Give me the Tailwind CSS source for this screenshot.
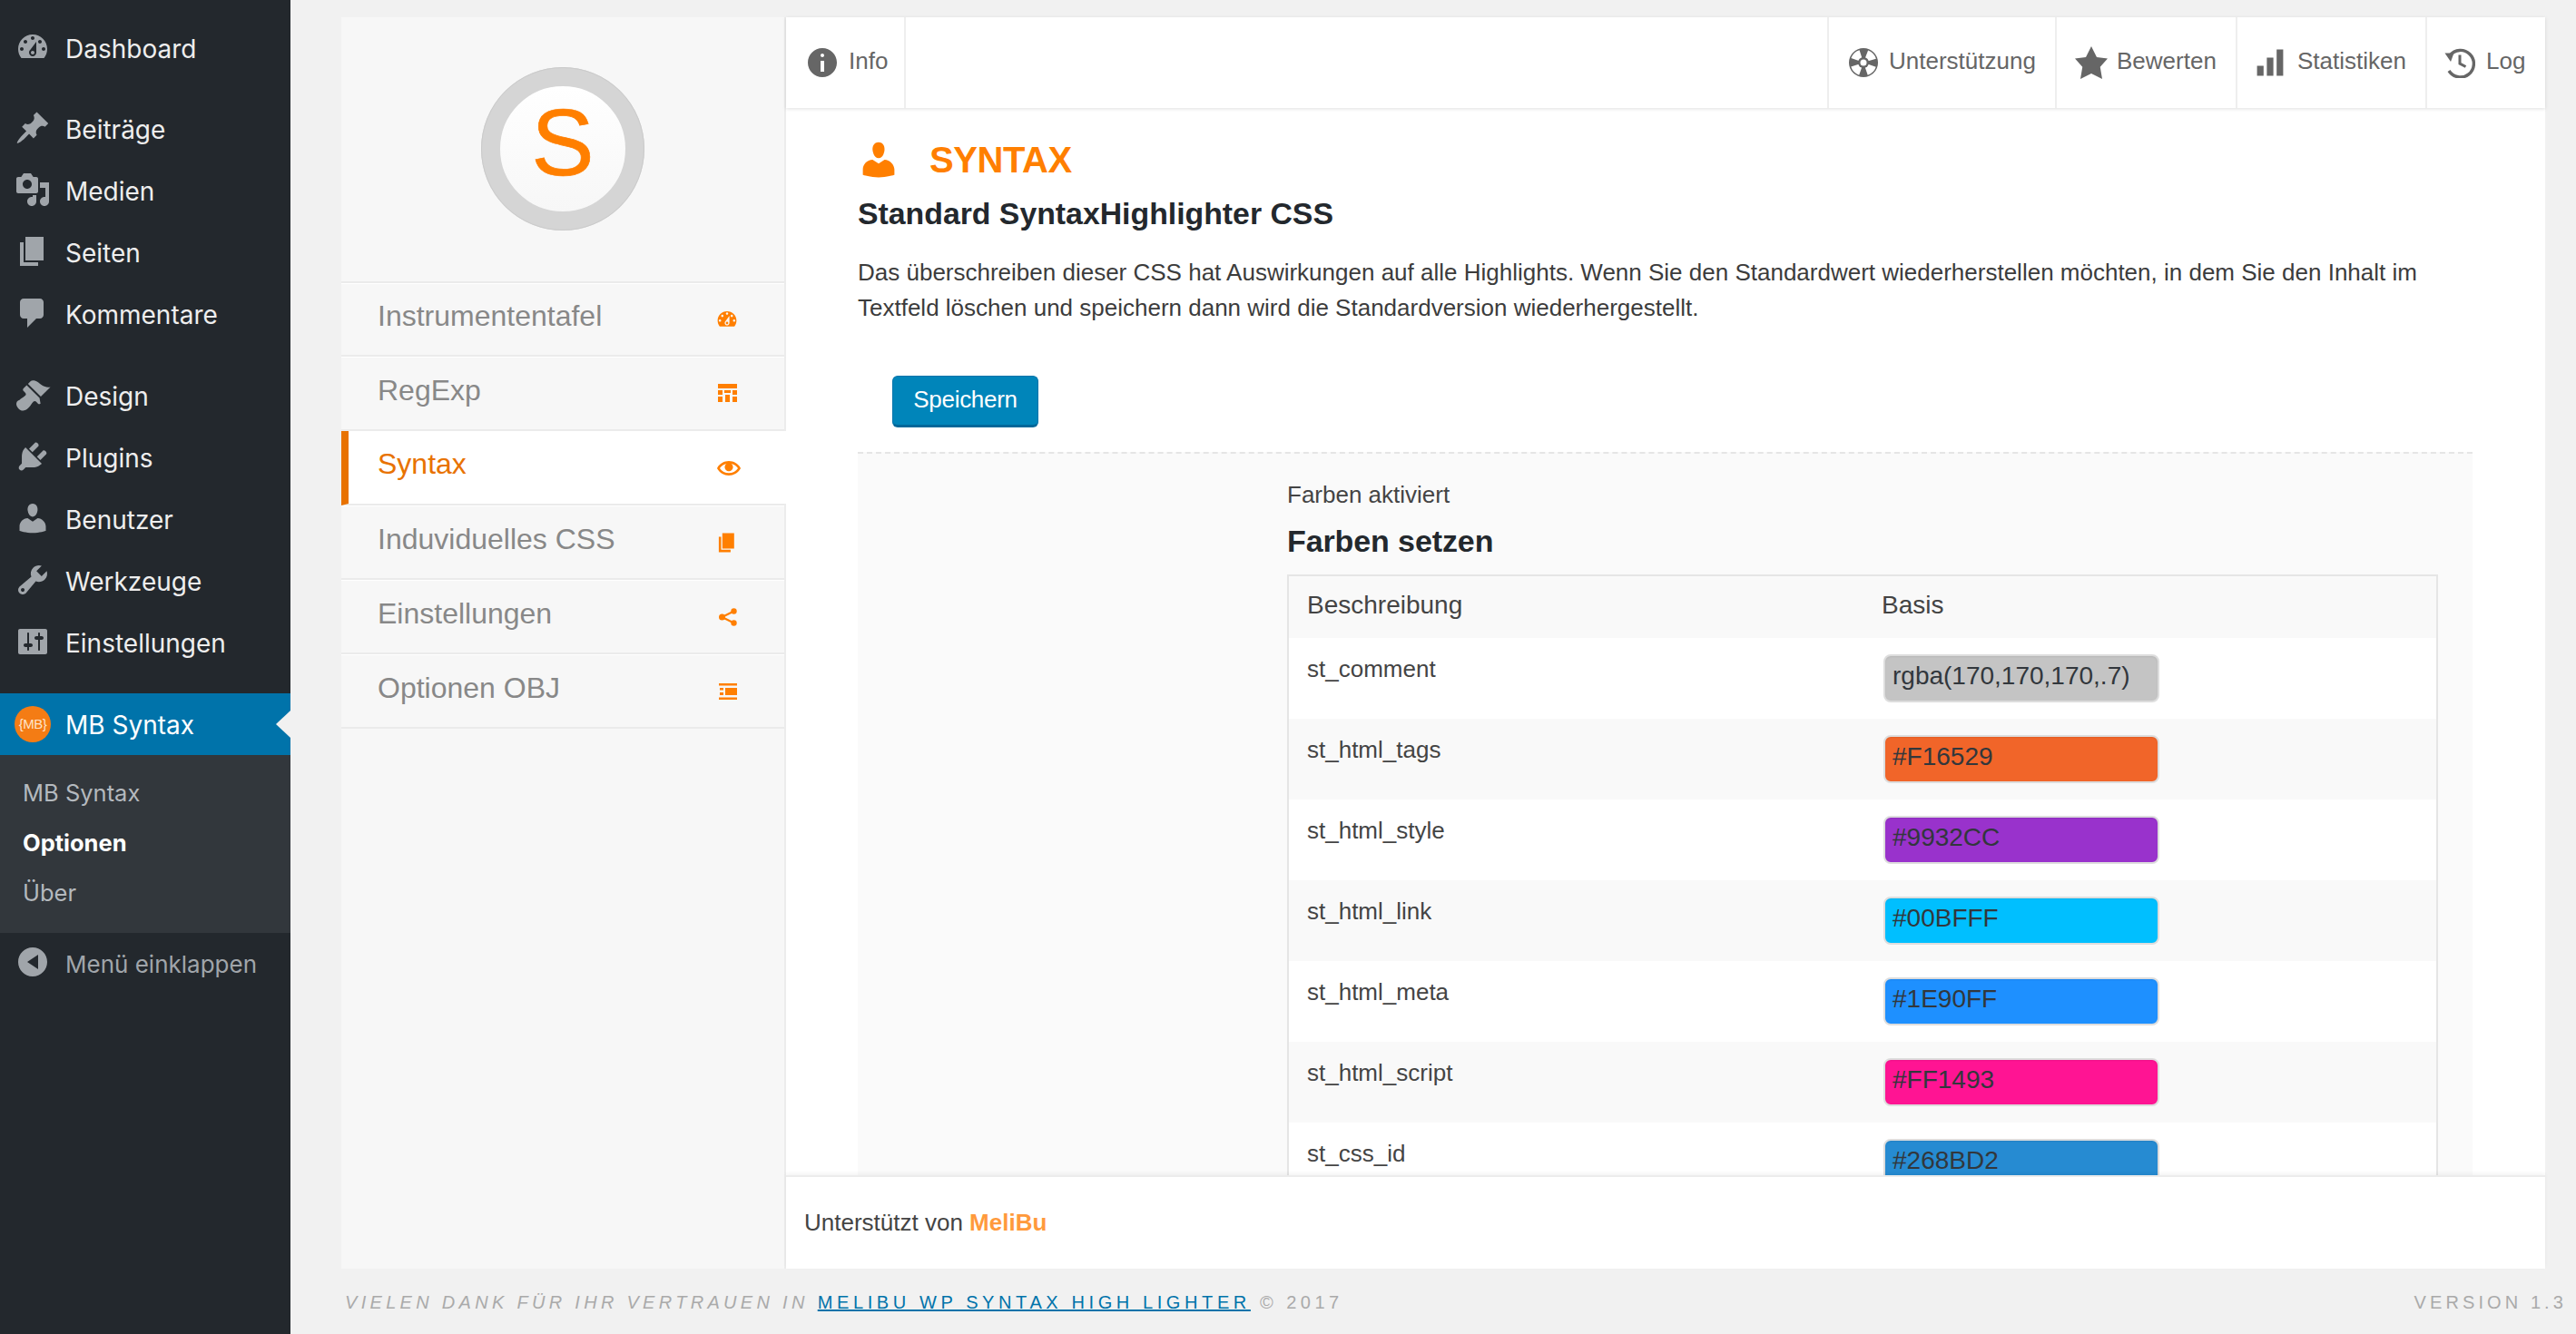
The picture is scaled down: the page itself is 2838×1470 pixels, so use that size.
<!DOCTYPE html>
<html lang="de">
<head>
<meta charset="utf-8">
<title>MB Syntax</title>
<script src="https://cdn.jsdelivr.net/npm/@tailwindcss/browser@4"></script>
</head>
<body class="m-0 bg-[#f1f1f1] font-['Liberation_Sans',Arial,sans-serif] text-[26px] text-[#444] overflow-hidden">
<div class="flex h-[1470px] w-[2838px]">

<!-- WP admin menu -->
<aside class="w-[320px] shrink-0 bg-[#23282d] font-['Inter',sans-serif] text-[28px] text-[#eee] pt-[20px]">
  <a class="flex items-center h-[68px]"><svg class="w-[40px] h-[40px] ml-[16px] mr-[16px] mb-[4px] fill-[#a0a5aa]" viewBox="0 0 20 20"><path d="M3.76 16h12.48c1.1-1.37 1.76-3.11 1.76-5 0-4.42-3.58-8-8-8s-8 3.58-8 8c0 1.89.66 3.63 1.76 5zM10 4c.55 0 1 .45 1 1s-.45 1-1 1-1-.45-1-1 .45-1 1-1zM6 6c.55 0 1 .45 1 1s-.45 1-1 1-1-.45-1-1 .45-1 1-1zm8 0c.55 0 1 .45 1 1s-.45 1-1 1-1-.45-1-1 .45-1 1-1zm-5.37 5.55L12 7v6c0 1.1-.9 2-2 2s-2-.9-2-2c0-.57.24-1.08.63-1.45zM4 10c.55 0 1 .45 1 1s-.45 1-1 1-1-.45-1-1 .45-1 1-1zm12 0c.55 0 1 .45 1 1s-.45 1-1 1-1-.45-1-1 .45-1 1-1zm-5 3c0-.55-.45-1-1-1s-1 .45-1 1 .45 1 1 1 1-.45 1-1z" fill-rule="evenodd"/></svg>Dashboard</a>
  <div class="mt-[21px]">
    <a class="flex items-center h-[68px]"><svg class="w-[40px] h-[40px] ml-[16px] mr-[16px] mb-[4px] fill-[#a0a5aa]" viewBox="0 0 20 20"><path d="M10.44 3.02l1.82-1.82 6.36 6.35-1.83 1.82c-1.05-.68-2.48-.57-3.41.36l-.75.75c-.92.93-1.04 2.35-.35 3.41l-1.83 1.82-2.41-2.41-2.8 2.79c-.42.42-3.38 2.71-3.8 2.29s1.86-3.39 2.28-3.81l2.79-2.79L4.1 9.36l1.83-1.82c1.05.69 2.48.57 3.4-.36l.75-.75c.93-.92 1.05-2.35.36-3.41z"/></svg>Beiträge</a>
    <a class="flex items-center h-[68px]"><svg class="w-[40px] h-[40px] ml-[16px] mr-[16px] mb-[4px] fill-[#a0a5aa]" viewBox="0 0 20 20"><path d="M13 11V4c0-.55-.45-1-1-1h-1.67L9 1H5L3.67 3H2c-.55 0-1 .45-1 1v7c0 .55.45 1 1 1h10c.55 0 1-.45 1-1zM7 4.5c1.38 0 2.5 1.12 2.5 2.5S8.38 9.5 7 9.5 4.5 8.38 4.5 7 5.62 4.5 7 4.5zM14 6h5v10.5c0 1.38-1.12 2.5-2.5 2.5S14 17.88 14 16.5s1.12-2.5 2.5-2.5c.17 0 .34.02.5.05V9h-3V6zm-4 8.05V13h2v3.5c0 1.38-1.12 2.5-2.5 2.5S7 17.88 7 16.5 8.12 14 9.5 14c.17 0 .34.02.5.05z"/></svg>Medien</a>
    <a class="flex items-center h-[68px]"><svg class="w-[40px] h-[40px] ml-[16px] mr-[16px] mb-[4px] fill-[#a0a5aa]" viewBox="0 0 20 20"><path d="M6 15V2h10v13H6zm-1 1h8v2H3V5h2v11z"/></svg>Seiten</a>
    <a class="flex items-center h-[68px]"><svg class="w-[40px] h-[40px] ml-[16px] mr-[16px] mb-[4px] fill-[#a0a5aa]" viewBox="0 0 20 20"><path d="M5 2h9c1.1 0 2 .9 2 2v7c0 1.1-.9 2-2 2h-2l-5 5v-5H5c-1.1 0-2-.9-2-2V4c0-1.1.9-2 2-2z"/></svg>Kommentare</a>
  </div>
  <div class="mt-[22px]">
    <a class="flex items-center h-[68px]"><svg class="w-[40px] h-[40px] ml-[16px] mr-[16px] mb-[4px] fill-[#a0a5aa]" viewBox="0 0 20 20"><path d="M14.48 11.06L7.41 3.99l1.5-1.5c.5-.56 2.3-.47 3.51.32 1.21.8 1.43 1.28 2.91 2.1 1.18.64 2.45 1.26 4.45.85zm-.71.71L6.7 4.7 4.93 6.47c-.39.39-.39 1.02 0 1.41l1.06 1.06c.39.39.39 1.03 0 1.42-.6.6-1.43 1.11-2.21 1.69-.35.26-.7.53-1.01.84C1.43 13.23.99 14.24 1 15.17c.02.94.48 1.73 1.19 2.43.7.7 1.49 1.16 2.43 1.17.93.01 1.94-.43 3.28-1.77.31-.31.58-.66.85-1.02.57-.78 1.08-1.6 1.69-2.21.39-.39 1.02-.39 1.41 0l1.06 1.06c.39.39 1.02.39 1.41 0z"/></svg>Design</a>
    <a class="flex items-center h-[68px]"><svg class="w-[40px] h-[40px] ml-[16px] mr-[16px] mb-[4px] fill-[#a0a5aa]" viewBox="0 0 20 20"><path d="M13.11 4.36L9.87 7.6 8 5.73l3.24-3.24c.35-.34 1.05-.2 1.56.32.52.51.66 1.21.31 1.55zm-8 1.77l.91-1.12 9.01 9.01-1.19.84c-.71.71-2.63 1.16-3.82 1.16H6.14L4.9 17.26c-.59.59-1.54.59-2.12 0-.59-.58-.59-1.53 0-2.12l1.24-1.24v-3.88c0-1.13.4-3.19 1.09-3.89zm7.26 3.97l3.24-3.24c.34-.35 1.04-.21 1.55.31.52.51.66 1.21.31 1.55l-3.24 3.25z"/></svg>Plugins</a>
    <a class="flex items-center h-[68px]"><svg class="w-[40px] h-[40px] ml-[16px] mr-[16px] mb-[4px] fill-[#a0a5aa]" viewBox="0 0 20 20"><path d="M10 9.25c-2.27 0-2.73-3.44-2.73-3.44C7 4.02 7.82 2 9.97 2c2.16 0 2.98 2.02 2.71 3.81 0 0-.41 3.44-2.68 3.44zm0 2.57L12.72 10c2.39 0 4.52 2.33 4.52 4.53v2.49s-3.65 1.13-7.24 1.13c-3.65 0-7.24-1.13-7.24-1.13v-2.49c0-2.25 1.94-4.48 4.47-4.48z"/></svg>Benutzer</a>
    <a class="flex items-center h-[68px]"><svg class="w-[40px] h-[40px] ml-[16px] mr-[16px] mb-[4px] fill-[#a0a5aa]" viewBox="0 0 20 20"><path d="M16.68 9.77c-1.34 1.34-3.3 1.67-4.95.99l-5.41 6.52c-.99.99-2.59.99-3.58 0s-.99-2.59 0-3.57l6.52-5.42c-.68-1.65-.35-3.61.99-4.95 1.28-1.28 3.12-1.62 4.72-1.06l-2.89 2.89 2.82 2.82 2.86-2.87c.53 1.58.18 3.39-1.08 4.65zM3.81 16.21c.4.39 1.04.39 1.43 0 .4-.4.4-1.04 0-1.43-.39-.4-1.03-.4-1.43 0-.39.39-.39 1.03 0 1.43z"/></svg>Werkzeuge</a>
    <a class="flex items-center h-[68px]"><svg class="w-[40px] h-[40px] ml-[16px] mr-[16px] mb-[4px] fill-[#a0a5aa]" viewBox="0 0 20 20"><path d="M18 16V4c0-.55-.45-1-1-1H3c-.55 0-1 .45-1 1v12c0 .55.45 1 1 1h14c.55 0 1-.45 1-1zM8 11h1c.55 0 1 .45 1 1s-.45 1-1 1H8v1.5c0 .28-.22.5-.5.5s-.5-.22-.5-.5V13H6c-.55 0-1-.45-1-1s.45-1 1-1h1V5.5c0-.28.22-.5.5-.5s.5.22.5.5V11zm5-2h-1c-.55 0-1-.45-1-1s.45-1 1-1h1V5.5c0-.28.22-.5.5-.5s.5.22.5.5V7h1c.55 0 1 .45 1 1s-.45 1-1 1h-1v5.5c0 .28-.22.5-.5.5s-.5-.22-.5-.5V9z"/></svg>Einstellungen</a>
  </div>
  <a class="relative flex items-center h-[68px] mt-[21px] pt-[2px] bg-[#0073aa] text-white">
    <span class="w-[40px] h-[40px] ml-[16px] mr-[16px] -mt-[2px] rounded-full bg-[#f47c14] flex items-center justify-center font-['Liberation_Sans',sans-serif] text-[15px] tracking-[-0.5px] text-[#ffe3c8]">{MB}</span>MB Syntax
    <span class="absolute right-0 top-[19px] w-0 h-0 border-y-[15px] border-y-transparent border-r-[16px] border-r-[#f1f1f1]"></span>
  </a>
  <div class="bg-[#32373c] h-[196px] pt-[15px] text-[25.5px] text-[#b4b9be]">
    <a class="flex items-center h-[55px] pl-[25px]">MB Syntax</a>
    <a class="flex items-center h-[55px] pl-[25px] font-bold text-white">Optionen</a>
    <a class="flex items-center h-[55px] pl-[25px]">Über</a>
  </div>
  <a class="flex items-center h-[68px] text-[26px] text-[#a0a5aa]"><svg class="w-[40px] h-[40px] ml-[16px] mr-[16px] mb-[4px] fill-[#a0a5aa]" viewBox="0 0 20 20"><path d="M18 10c0-4.42-3.58-8-8-8s-8 3.58-8 8 3.58 8 8 8 8-3.58 8-8zm-5-4v8l-6-4z"/></svg>Menü einklappen</a>
</aside>

<!-- Content area -->
<div class="flex-1 min-w-0 pl-[56px] pr-[34px] pt-[19px]">
  <div class="flex h-[1379px]">

    <!-- Plugin nav -->
    <nav class="w-[490px] shrink-0 bg-[#f7f7f7] border-r-2 border-r-[#ececec] text-[32px] text-[#888]">
      <div class="h-[293px] flex items-start justify-center pt-[55px] border-b-2 border-b-[#ebebeb]">
        <div class="w-[180px] h-[180px] pb-[14px] rounded-full border-[21px] border-[#d5d5d5] bg-gradient-to-b from-white to-[#f7f7f7] flex items-center justify-center text-[104px] leading-none text-[#ff7f00] [-webkit-text-stroke:0.7px_#ff7f00] outline outline-1 -outline-offset-1 outline-[#cbcbcb]">S</div>
      </div>
      <a class="flex items-center justify-between h-[81px] pl-[40px] pr-[50px] border-t border-t-white border-b-2 border-b-[#ebebeb]"><span class="-mt-[8px]">Instrumententafel</span><svg class="w-[26px] h-[26px] fill-[#ff7f00]" viewBox="0 0 20 20"><path d="M3.76 16h12.48c1.1-1.37 1.76-3.11 1.76-5 0-4.42-3.58-8-8-8s-8 3.58-8 8c0 1.89.66 3.63 1.76 5zM10 4c.55 0 1 .45 1 1s-.45 1-1 1-1-.45-1-1 .45-1 1-1zM6 6c.55 0 1 .45 1 1s-.45 1-1 1-1-.45-1-1 .45-1 1-1zm8 0c.55 0 1 .45 1 1s-.45 1-1 1-1-.45-1-1 .45-1 1-1zm-5.37 5.55L12 7v6c0 1.1-.9 2-2 2s-2-.9-2-2c0-.57.24-1.08.63-1.45zM4 10c.55 0 1 .45 1 1s-.45 1-1 1-1-.45-1-1 .45-1 1-1zm12 0c.55 0 1 .45 1 1s-.45 1-1 1-1-.45-1-1 .45-1 1-1zm-5 3c0-.55-.45-1-1-1s-1 .45-1 1 .45 1 1 1 1-.45 1-1z" fill-rule="evenodd"/></svg></a>
      <a class="flex items-center justify-between h-[82px] pl-[40px] pr-[52px] border-t border-t-white border-b-2 border-b-[#ebebeb]"><span class="-mt-[8px]">RegExp</span><svg class="w-[21px] h-[21px] fill-[#ff7f00]" viewBox="0 0 21 21"><path d="M0 0h21v5H0zM0 7h5v5H0zM0 14h5v6H0zM7 7h7v3H7zM8 12h5v8H8zM16 7h5v5h-5zM16 14h5v6h-5z"/></svg></a>
      <a class="flex items-center justify-between h-[82px] pl-[32px] pr-[50px] -mr-[2px] bg-white border-l-[8px] border-l-[#e87200] text-[#e87200] border-b-2 border-b-[#ebebeb] relative"><span class="-mt-[8px]">Syntax</span><svg class="w-[26px] h-[26px] mt-[2px] fill-[#ff7f00]" viewBox="0 0 20 20"><path d="M19.7 9.4C17.7 6 14 3.9 10 3.9S2.3 6 .3 9.4L0 10l.3.6c2 3.4 5.7 5.5 9.7 5.5s7.7-2.1 9.7-5.500l.3-.6-.3-.6zM10 14.100c-3.100 0-6-1.600-7.700-4.100C3.600 8 5.700 6.600 8 6.100c-.9.600-1.500 1.700-1.500 2.900 0 1.900 1.600 3.500 3.500 3.500s3.500-1.600 3.500-3.500c0-1.200-.6-2.300-1.500-2.900 2.300.5 4.400 1.900 5.700 3.900-1.700 2.500-4.600 4.100-7.700 4.100z"/></svg></a>
      <a class="flex items-center justify-between h-[82px] pl-[40px] pr-[50px] border-t border-t-white border-b-2 border-b-[#ebebeb]"><span class="-mt-[8px]">Induviduelles CSS</span><svg class="w-[26px] h-[26px] fill-[#ff7f00]" viewBox="0 0 20 20"><path d="M6 15V2h10v13H6zm-1 1h8v2H3V5h2v11z"/></svg></a>
      <a class="flex items-center justify-between h-[82px] pl-[40px] pr-[50px] border-t border-t-white border-b-2 border-b-[#ebebeb]"><span class="-mt-[8px]">Einstellungen</span><svg class="w-[24px] h-[24px] fill-[#ff7f00] stroke-[#ff7f00]" viewBox="0 0 24 24" stroke-width="2.2"><path d="M18.500 5.500L5.500 12l13 6.500" fill="none"/><circle cx="18.500" cy="5.500" r="3.200" stroke="none"/><circle cx="5.500" cy="12" r="3.500" stroke="none"/><circle cx="18.500" cy="18.500" r="3.200" stroke="none"/></svg></a>
      <a class="flex items-center justify-between h-[82px] pl-[40px] pr-[50px] border-t border-t-white border-b-2 border-b-[#ebebeb]"><span class="-mt-[8px]">Optionen OBJ</span><svg class="w-[24px] h-[24px] fill-[#ff7f00]" viewBox="0 0 24 24"><path d="M2 3h20v2.500H2zM9 8h13v8H9zM3 8h4v2.500H3zM3 13h4v3H3zM2 18.500h20v2.500H2z"/></svg></a>
    </nav>

    <!-- Main panel -->
    <main class="flex-1 min-w-0 flex flex-col bg-white">
      <header class="relative z-10 flex h-[100px] shrink-0 bg-white shadow-[0_1px_4px_rgba(0,0,0,0.13)] text-[26px] text-[#666]">
        <a class="flex items-center gap-[13px] w-[132px] pl-[24px] pb-[4px] border-r-2 border-r-[#eee]"><svg class="w-[40px] h-[40px] shrink-0 -ml-[4px] mt-[4px] fill-[#666]" viewBox="0 0 20 20"><path d="M10 2c4.42 0 8 3.58 8 8s-3.58 8-8 8-8-3.58-8-8 3.58-8 8-8zm1 4c0-.55-.45-1-1-1s-1 .45-1 1 .45 1 1 1 1-.45 1-1zm0 9V9H9v6h2z"/></svg><span class="-ml-[4px]">Info</span></a>
        <div class="flex-1"></div>
        <a class="flex items-center gap-[12px] w-[251px] pl-[22px] pb-[4px] border-l-2 border-l-[#eee]"><svg class="w-[32px] h-[32px] shrink-0 mt-[4px]" viewBox="0 0 32 32"><circle cx="16" cy="16" r="16" fill="#666"/><circle cx="16" cy="16" r="10" fill="none" stroke="#fff" stroke-width="9" stroke-dasharray="9 6.700" stroke-dashoffset="-3.300"/><circle cx="16" cy="16" r="6" fill="#666"/><circle cx="16" cy="16" r="3.500" fill="#fff"/></svg><span>Unterstützung</span></a>
        <a class="flex items-center gap-[8px] w-[199px] pl-[18px] pb-[4px] border-l-2 border-l-[#eee]"><svg class="w-[40px] h-[40px] shrink-0 mt-[4px] fill-[#666]" viewBox="0 0 20 20"><path d="M10 1l3 6 6 .75-4.12 4.62L16 19l-6-3-6 3 1.13-6.63L1 7.75 7 7z"/></svg><span>Bewerten</span></a>
        <a class="flex items-center gap-[12px] w-[209px] pl-[18px] pb-[4px] border-l-2 border-l-[#eee]"><svg class="w-[36px] h-[36px] shrink-0 mt-[4px] fill-[#666]" viewBox="0 0 20 20"><path d="M18 18V2h-4v16h4zm-6 0V7H8v11h4zm-6 0v-6H2v6h4z"/></svg><span>Statistiken</span></a>
        <a class="flex items-center gap-[12px] w-[132px] pl-[19px] pb-[4px] border-l-2 border-l-[#eee]"><svg class="w-[34px] h-[34px] shrink-0 mt-[4px] fill-none stroke-[#666]" viewBox="0 0 34 34" stroke-width="3.400"><path d="M6 9A14.800 14.800 0 1 1 5 26"/><path d="M0.500 6.500L10.500 6.500L7 16Z" fill="#666" stroke="none"/><path d="M17 8.500V18L23.500 21.500" stroke-width="3"/></svg><span>Log</span></a>
      </header>

      <section class="relative flex-1 min-h-0 overflow-hidden pl-[79px] pr-[80px]">
        <h1 class="flex items-center m-0 mt-[36px] h-[42px] font-bold text-[40px] tracking-[-0.4px] text-[#ff7f00]"><svg class="w-[48px] h-[48px] -ml-[1px] mr-[32px] shrink-0 fill-[#ff7f00]" viewBox="0 0 20 20"><path d="M10 9.250c-2.270 0-2.730-3.440-2.730-3.440C7 4.020 7.820 2 9.970 2c2.160 0 2.980 2.020 2.710 3.810 0 0-.41 3.440-2.680 3.440zm0 2.570L12.720 10c2.390 0 4.520 2.330 4.520 4.530v2.490s-3.650 1.130-7.240 1.130c-3.650 0-7.240-1.130-7.240-1.130v-2.490c0-2.250 1.940-4.480 4.470-4.480z"/></svg>SYNTAX</h1>
        <h2 class="m-0 mt-[17px] font-bold text-[33.800px] leading-[42px] text-[#23282d]">Standard SyntaxHighlighter CSS</h2>
        <p class="m-0 mt-[25px] w-[1750px] text-[26px] leading-[39px] text-[#3c3c3c]">Das überschreiben dieser CSS hat Auswirkungen auf alle Highlights. Wenn Sie den Standardwert wiederherstellen möchten, in dem Sie den Inhalt im Textfeld löschen und speichern dann wird die Standardversion wiederhergestellt.</p>
        <button class="block mt-[55px] ml-[38px] w-[161px] h-[57px] rounded-[6px] bg-[#0085ba] border border-[#0073aa] border-b-[3px] border-b-[#006799] text-white text-[26px] tracking-[-0.3px] pb-[3px]">Speichern</button>
        <div class="mt-[27px] h-[800px] border-t-2 border-dashed border-t-[#e5e5e5] bg-[#fafafa] pl-[473px] pr-[38px]">
          <div class="pt-[27px] leading-[36px] text-[#444]">Farben aktiviert</div>
          <h3 class="m-0 mt-[12px] font-bold text-[34px] leading-[42px] tracking-[-0.1px] text-[#23282d]">Farben setzen</h3>
          <div class="mt-[16px] border-2 border-[#e5e5e5] border-b-0">
            <div class="flex items-center h-[68px] bg-[#f9f9f9] text-[28px] pl-[20px] pb-[4px] text-[#444]"><span class="w-[633px]">Beschreibung</span><span>Basis</span></div>
            <div class="flex h-[89px] bg-white pl-[20px]"><span class="w-[635px] pt-[16px] leading-[36px]">st_comment</span><span class="mt-[18px] w-[304px] h-[53px] rounded-[8px] border-2 border-[#ddd] bg-[#c4c4c4] pl-[8px] text-[28px] leading-[44px] text-[#32373c] shadow-[inset_0_1px_2px_rgba(0,0,0,0.07)]">rgba(170,170,170,.7)</span></div>
            <div class="flex h-[89px] bg-[#f9f9f9] pl-[20px]"><span class="w-[635px] pt-[16px] leading-[36px]">st_html_tags</span><span class="mt-[18px] w-[304px] h-[53px] rounded-[8px] border-2 border-[#ddd] bg-[#F16529] pl-[8px] text-[28px] leading-[44px] text-[#32373c] shadow-[inset_0_1px_2px_rgba(0,0,0,0.07)]">#F16529</span></div>
            <div class="flex h-[89px] bg-white pl-[20px]"><span class="w-[635px] pt-[16px] leading-[36px]">st_html_style</span><span class="mt-[18px] w-[304px] h-[53px] rounded-[8px] border-2 border-[#ddd] bg-[#9932CC] pl-[8px] text-[28px] leading-[44px] text-[#32373c] shadow-[inset_0_1px_2px_rgba(0,0,0,0.07)]">#9932CC</span></div>
            <div class="flex h-[89px] bg-[#f9f9f9] pl-[20px]"><span class="w-[635px] pt-[16px] leading-[36px]">st_html_link</span><span class="mt-[18px] w-[304px] h-[53px] rounded-[8px] border-2 border-[#ddd] bg-[#00BFFF] pl-[8px] text-[28px] leading-[44px] text-[#32373c] shadow-[inset_0_1px_2px_rgba(0,0,0,0.07)]">#00BFFF</span></div>
            <div class="flex h-[89px] bg-white pl-[20px]"><span class="w-[635px] pt-[16px] leading-[36px]">st_html_meta</span><span class="mt-[18px] w-[304px] h-[53px] rounded-[8px] border-2 border-[#ddd] bg-[#1E90FF] pl-[8px] text-[28px] leading-[44px] text-[#32373c] shadow-[inset_0_1px_2px_rgba(0,0,0,0.07)]">#1E90FF</span></div>
            <div class="flex h-[89px] bg-[#f9f9f9] pl-[20px]"><span class="w-[635px] pt-[16px] leading-[36px]">st_html_script</span><span class="mt-[18px] w-[304px] h-[53px] rounded-[8px] border-2 border-[#ddd] bg-[#FF1493] pl-[8px] text-[28px] leading-[44px] text-[#32373c] shadow-[inset_0_1px_2px_rgba(0,0,0,0.07)]">#FF1493</span></div>
            <div class="flex h-[89px] bg-white pl-[20px]"><span class="w-[635px] pt-[16px] leading-[36px]">st_css_id</span><span class="mt-[18px] w-[304px] h-[53px] rounded-[8px] border-2 border-[#ddd] bg-[#268BD2] pl-[8px] text-[28px] leading-[44px] text-[#32373c] shadow-[inset_0_1px_2px_rgba(0,0,0,0.07)]">#268BD2</span></div>
          </div>
        </div>
      </section>

      <footer class="relative z-10 flex items-center h-[103px] shrink-0 bg-white border-t-2 border-t-[#ececec] shadow-[0_-2px_4px_rgba(0,0,0,0.05)] pl-[20px] text-[26px] text-[#444]"><span>Unterstützt von <b class="text-[#ff9a3c]">MeliBu</b></span></footer>
    </main>
  </div>

  <div class="flex justify-between items-center h-[72px] pt-[2px] pl-[4px] -mr-[24px] text-[20px] tracking-[4.500px] text-[#aaa]">
    <p class="m-0"><i class="tracking-[4.300px]">VIELEN DANK FÜR IHR VERTRAUEN IN</i> <a class="text-[#0073aa] underline tracking-[4.600px]">MELIBU WP SYNTAX HIGH LIGHTER</a> © 2017</p>
    <p class="m-0 tracking-[4.100px]">VERSION 1.3</p>
  </div>
</div>
</div>
</body>
</html>
